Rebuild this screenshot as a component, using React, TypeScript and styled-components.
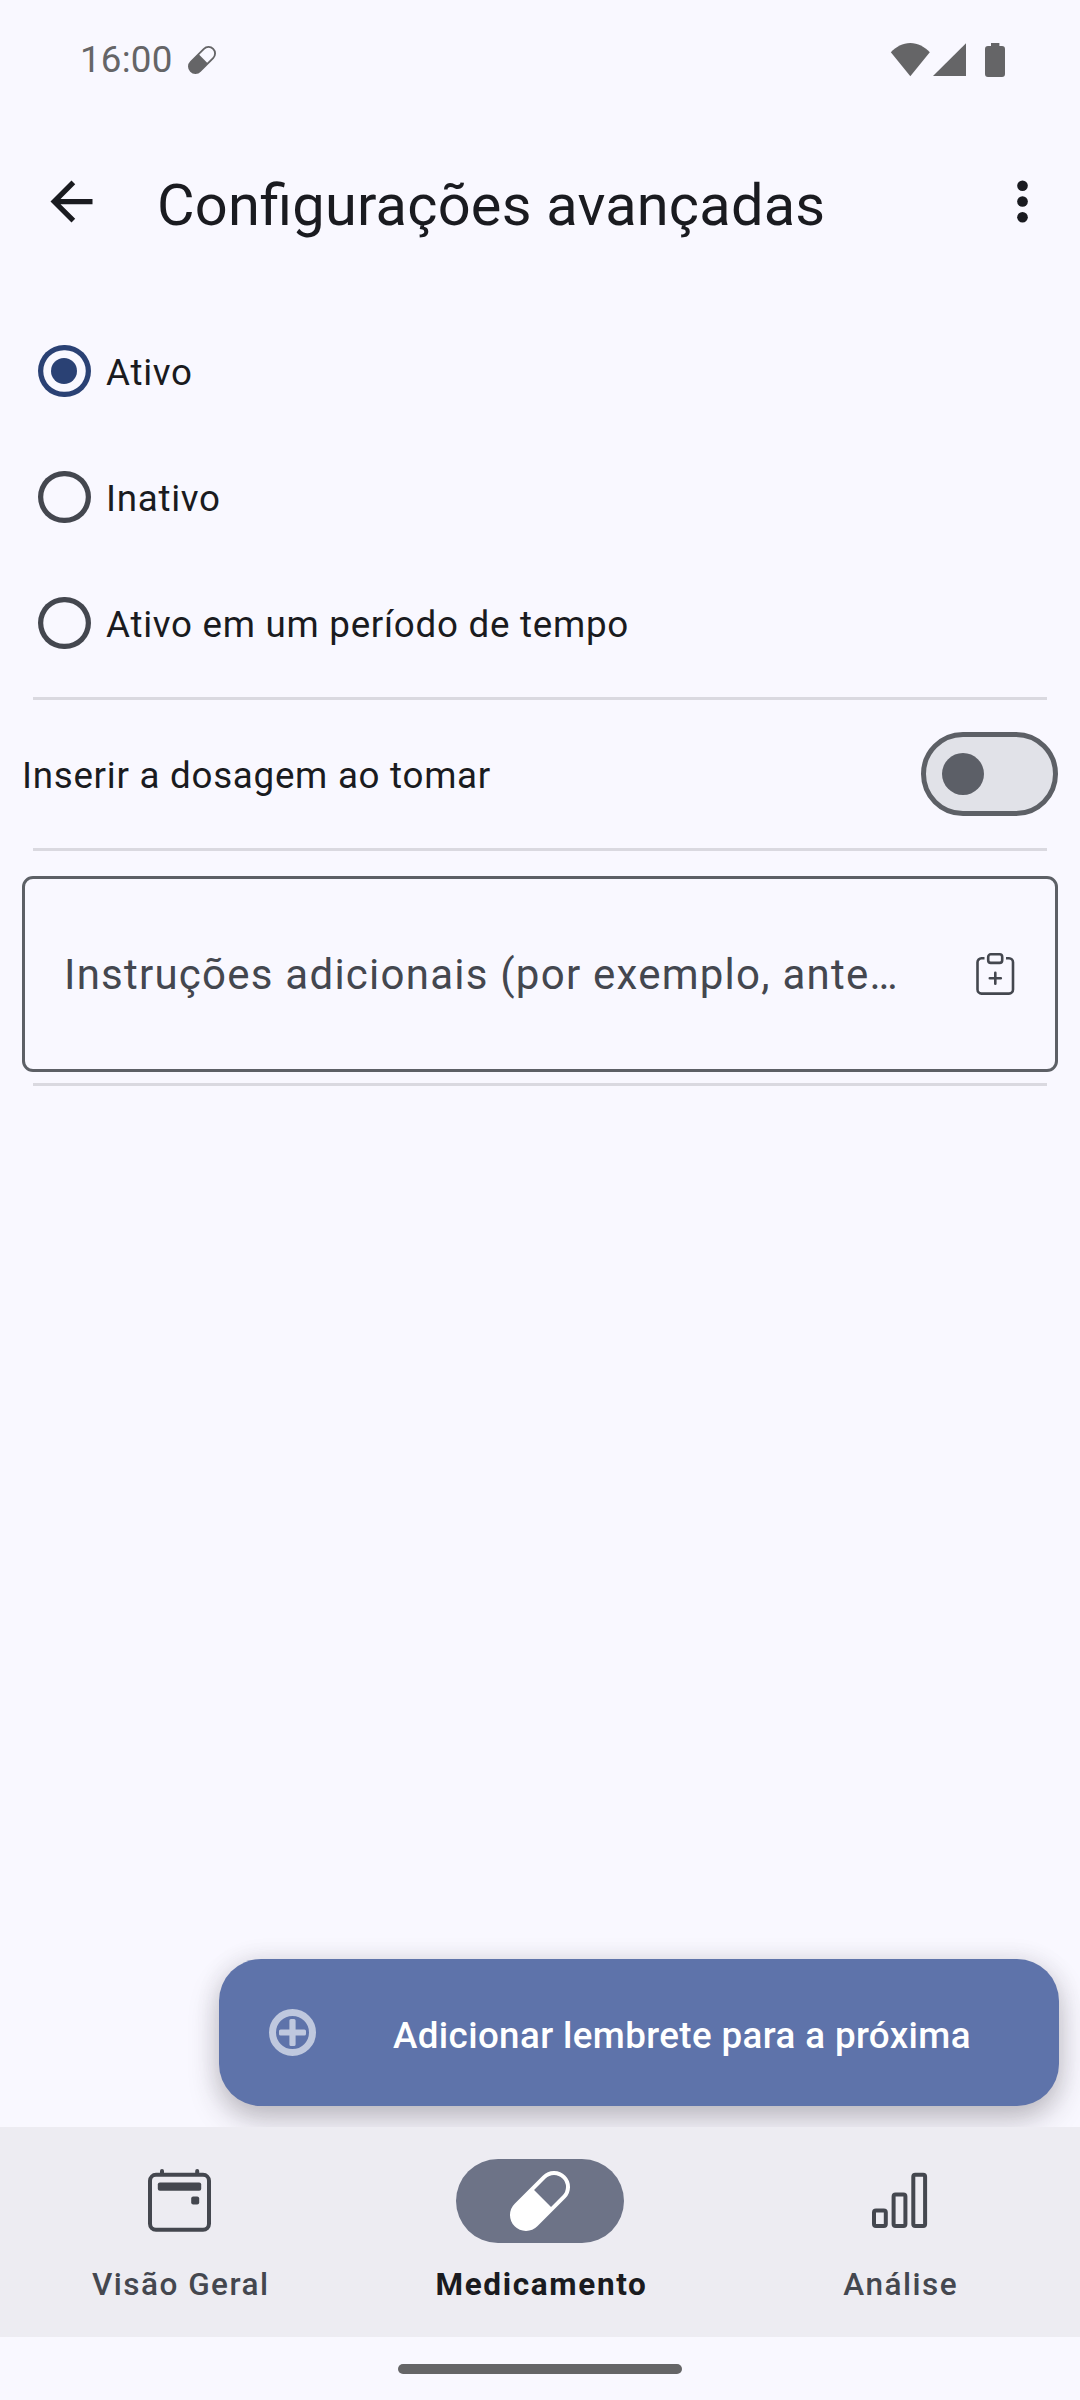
import React, { useState } from "react";
import styled, { createGlobalStyle } from "styled-components";

const color = {
  surface: "#f9f8ff",
  navSurface: "#edecf2",
  text: "#1a1b20",
  textMuted: "#44474f",
  outline: "#5d6066",
  divider: "#dad9e0",
  primary: "#2a4174",
  fab: "#5e73aa",
  fabIcon: "#bfc8de",
  indicator: "#6d7387",
  system: "#656567",
};

const GlobalStyle = createGlobalStyle`
  html, body { margin: 0; padding: 0; background: ${color.surface}; }
  *, *::before, *::after { box-sizing: border-box; }
  button { font: inherit; border: 0; background: none; padding: 0; margin: 0; color: inherit; }
  svg { display: block; flex: none; }
`;

const Screen = styled.div`
  width: 1080px;
  height: 2400px;
  display: flex;
  flex-direction: column;
  overflow: hidden;
  background: ${color.surface};
  color: ${color.text};
  font-family: Roboto, "Noto Sans", sans-serif;
`;

const StatusBar = styled.header`
  height: 127px;
  flex: none;
  display: flex;
  align-items: center;
  padding: 0 75px 7px 80px;
  color: ${color.system};
`;

const Clock = styled.span`
  width: 108px;
  font-size: 36.75px;
  line-height: 44px;
  letter-spacing: 0.2px;
`;

const StatusIcons = styled.div`
  margin-left: auto;
  display: flex;
  align-items: center;
`;

const Toolbar = styled.div`
  height: 147px;
  flex: none;
  display: flex;
  align-items: center;
  padding: 1px 26px 0 40px;
`;

const Title = styled.h1`
  flex: 1;
  margin: 0;
  padding: 7px 0 0 54px;
  font-size: 57.75px;
  font-weight: 400;
  line-height: 68px;
  letter-spacing: 0.21px;
  font-feature-settings: "liga" 1;
`;

const IconButton = styled.button`
  width: 63px;
  height: 63px;
`;

const Content = styled.main`
  flex: 1;
  display: flex;
  flex-direction: column;
  padding: 34px 22px 21px;
`;

const RadioRow = styled.label`
  height: 126px;
  display: flex;
  align-items: center;
  gap: 15.5px;
  padding-left: 16px;
`;

const RadioRing = styled.span<{ $on: boolean }>`
  width: 52.5px;
  height: 52.5px;
  border-radius: 50%;
  box-shadow: inset 0 0 0 5.25px ${(p) => (p.$on ? color.primary : color.textMuted)};
  display: grid;
  place-items: center;
`;

const RadioDot = styled.span`
  width: 26.25px;
  height: 26.25px;
  border-radius: 50%;
  background: ${color.primary};
`;

const BodyText = styled.span`
  padding-top: 4px;
  font-size: 36.75px;
  line-height: 52px;
  letter-spacing: 0.72px;
`;

const Divider = styled.hr<{ $gap?: number }>`
  width: 1014px;
  height: 3px;
  flex: none;
  border: 0;
  margin: ${(p) => p.$gap ?? 0}px auto 0;
  background: ${color.divider};
`;

const SwitchRow = styled.div`
  height: 148px;
  display: flex;
  align-items: center;
  justify-content: space-between;
`;

const SwitchTrack = styled.button`
  width: 137px;
  height: 84px;
  border: 5px solid ${color.outline};
  border-radius: 42px;
  background: #e1e2e8;
  display: flex;
  align-items: center;
  padding-left: 16px;
`;

const SwitchThumb = styled.span`
  width: 42px;
  height: 42px;
  border-radius: 50%;
  background: #5c5f67;
`;

const Field = styled.div`
  height: 196px;
  margin-top: 25px;
  border: 3px solid ${color.outline};
  border-radius: 11px;
  display: flex;
  align-items: center;
  justify-content: space-between;
  padding: 0 28px 0 39px;
  color: ${color.textMuted};
`;

const Placeholder = styled.span`
  padding-top: 2px;
  font-size: 42px;
  line-height: 56px;
  letter-spacing: 1.24px;
  white-space: nowrap;
`;

const FieldIcon = styled.span`
  width: 63px;
  height: 63px;
  display: grid;
  place-items: center;
`;

const Fab = styled.button`
  width: 840px;
  height: 147px;
  flex: none;
  margin: auto -1px 0 auto;
  border-radius: 42px;
  background: ${color.fab};
  box-shadow: 0 14px 30px rgba(45, 38, 45, 0.27), 0 0 24px rgba(50, 45, 60, 0.1);
  display: flex;
  align-items: center;
  padding-left: 42px;
  color: #fff;
`;

const FabLabel = styled.span`
  margin-left: 69px;
  padding-top: 7px;
  font-size: 36.75px;
  font-weight: 500;
  line-height: 52px;
  letter-spacing: 0.38px;
  white-space: nowrap;
`;

const NavBar = styled.nav`
  position: relative;
  height: 210px;
  flex: none;
  display: grid;
  grid-template-columns: repeat(3, 1fr);
  background: ${color.navSurface};
`;

const NavItem = styled.button<{ $active?: boolean }>`
  display: flex;
  flex-direction: column;
  align-items: center;
  padding-top: 32px;
  gap: 21px;
  font-size: 31.5px;
  line-height: 42px;
  letter-spacing: ${(p) => (p.$active ? 1.65 : 1.5)}px;
  text-indent: ${(p) => (p.$active ? 3 : 1.5)}px;
  font-weight: ${(p) => (p.$active ? 700 : 500)};
  color: ${(p) => (p.$active ? color.text : color.textMuted)};
`;

const Indicator = styled.span<{ $active?: boolean }>`
  width: 168px;
  height: 84px;
  border-radius: 42px;
  display: grid;
  place-items: center;
  background: ${(p) => (p.$active ? color.indicator : "transparent")};
`;

const GestureArea = styled.footer`
  height: 63px;
  flex: none;
  display: flex;
  justify-content: center;
  padding-top: 27px;
`;

const GestureHandle = styled.span`
  width: 284px;
  height: 10px;
  border-radius: 5px;
  background: ${color.system};
`;

const PillIcon = ({ size, fill }: { size: number; fill: string }) => (
  <svg width={size} height={size} viewBox="-30 -30 60 60">
    <g transform="rotate(-45)">
      <path
        fill={fill}
        fillRule="evenodd"
        d="M-19.8-16H19.8A16 16 0 0 1 19.8 16H-19.8A16 16 0 0 1-19.8-16ZM3.6-12V12H19.8A12 12 0 0 0 19.8-12Z"
      />
    </g>
  </svg>
);

const BackIcon = () => (
  <svg width="63" height="63" viewBox="0 0 24 24" fill={color.text}>
    <path d="M20 11H7.83l5.59-5.59L12 4l-8 8 8 8 1.41-1.41L7.83 13H20v-2z" />
  </svg>
);

const MoreIcon = () => (
  <svg width="63" height="63" viewBox="0 0 24 24" fill={color.text}>
    <circle cx="12" cy="6" r="2.03" />
    <circle cx="12" cy="12" r="2.03" />
    <circle cx="12" cy="18" r="2.03" />
  </svg>
);

const SystemIcons = () => (
  <svg width="115" height="36" viewBox="0 0 115 36" fill={color.system}>
    <path d="M0.8 10.3C6 4.8 12.8 1 20.3 1S34.6 4.8 39.8 10.3L20.3 34.2Z" />
    <path d="M76 1.2V34H43Z" />
    <path d="M101 1h8.4v3H112a3 3 0 0 1 3 3V32a3 3 0 0 1-3 3H98a3 3 0 0 1-3-3V7a3 3 0 0 1 3-3h3Z" />
  </svg>
);

const ClipboardIcon = () => (
  <svg width="44" height="44" viewBox="0 0 44 44" fill="none" stroke={color.textMuted} strokeWidth="2.6" strokeLinecap="round">
    <path d="M10.5 6.3H7.5a4 4 0 0 0-4 4V37.6a4 4 0 0 0 4 4H35a4 4 0 0 0 4-4V10.3a4 4 0 0 0-4-4H32" strokeLinecap="butt" />
    <rect x="14.2" y="2.3" width="14" height="8.6" rx="2.6" />
    <path d="M21.3 20.8v11M15.8 26.3h11" />
  </svg>
);

const AddIcon = () => (
  <svg width="63" height="63" viewBox="0 0 63 63" fill={color.fabIcon}>
    <circle cx="31.5" cy="31.5" r="20" fill="none" stroke={color.fabIcon} strokeWidth="7" />
    <path d="M30 18h3a1.6 1.6 0 0 1 1.6 1.6v8.8h8.8a1.6 1.6 0 0 1 1.6 1.6v3a1.6 1.6 0 0 1-1.6 1.6h-8.8v8.8a1.6 1.6 0 0 1-1.6 1.6h-3a1.6 1.6 0 0 1-1.6-1.6v-8.8h-8.8a1.6 1.6 0 0 1-1.6-1.6v-3a1.6 1.6 0 0 1 1.6-1.6h8.8v-8.8A1.6 1.6 0 0 1 30 18Z" />
  </svg>
);

const CalendarIcon = () => (
  <svg width="64" height="64" viewBox="0 0 64 64" fill={color.textMuted}>
    <rect x="2" y="5.8" width="59" height="55" rx="6" fill="none" stroke={color.textMuted} strokeWidth="4" />
    <path d="M12 6V2a2 2 0 0 1 4 0V6ZM47.2 6V2a2 2 0 0 1 4 0V6Z" />
    <rect x="9.8" y="13.6" width="43.4" height="8.2" rx="2" />
    <rect x="43.2" y="27.4" width="8" height="8.2" rx="2" />
  </svg>
);

const ChartIcon = () => (
  <svg width="64" height="64" viewBox="0 0 64 64" fill="none" stroke={color.textMuted} strokeWidth="4">
    <rect x="6" y="41.4" width="11.8" height="15.6" rx="2" />
    <rect x="25.6" y="25.6" width="11.8" height="31.4" rx="2" />
    <rect x="45.3" y="5.8" width="11.8" height="51.2" rx="2" />
  </svg>
);

const options = ["Ativo", "Inativo", "Ativo em um período de tempo"];

export default function App() {
  const [selected, setSelected] = useState(0);
  return (
    <>
      <GlobalStyle />
      <Screen>
        <StatusBar>
          <Clock>16:00</Clock>
          <PillIcon size={28} fill={color.system} />
          <StatusIcons>
            <SystemIcons />
          </StatusIcons>
        </StatusBar>
        <Toolbar>
          <IconButton aria-label="Voltar">
            <BackIcon />
          </IconButton>
          <Title>Configurações avançadas</Title>
          <IconButton aria-label="Mais opções">
            <MoreIcon />
          </IconButton>
        </Toolbar>
        <Content>
          {options.map((label, i) => (
            <RadioRow key={label} onClick={() => setSelected(i)}>
              <RadioRing $on={i === selected}>{i === selected && <RadioDot />}</RadioRing>
              <BodyText>{label}</BodyText>
            </RadioRow>
          ))}
          <Divider $gap={11} />
          <SwitchRow>
            <BodyText>Inserir a dosagem ao tomar</BodyText>
            <SwitchTrack role="switch" aria-checked={false}>
              <SwitchThumb />
            </SwitchTrack>
          </SwitchRow>
          <Divider />
          <Field>
            <Placeholder>Instruções adicionais (por exemplo, ante…</Placeholder>
            <FieldIcon>
              <ClipboardIcon />
            </FieldIcon>
          </Field>
          <Divider $gap={11} />
          <Fab>
            <AddIcon />
            <FabLabel>Adicionar lembrete para a próxima</FabLabel>
          </Fab>
        </Content>
        <NavBar>
          <NavItem>
            <Indicator>
              <CalendarIcon />
            </Indicator>
            Visão Geral
          </NavItem>
          <NavItem $active>
            <Indicator $active>
              <PillIcon size={60} fill="#ffffff" />
            </Indicator>
            Medicamento
          </NavItem>
          <NavItem>
            <Indicator>
              <ChartIcon />
            </Indicator>
            Análise
          </NavItem>
        </NavBar>
        <GestureArea>
          <GestureHandle />
        </GestureArea>
      </Screen>
    </>
  );
}
